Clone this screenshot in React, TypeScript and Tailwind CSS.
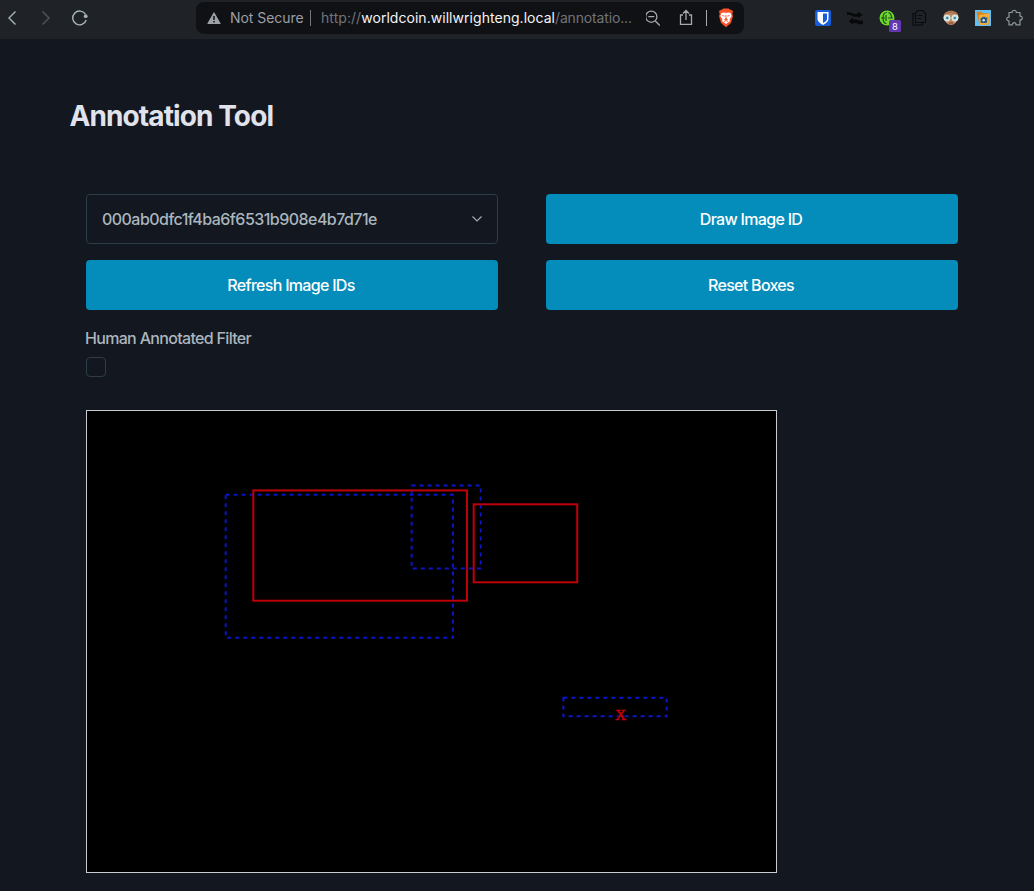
const blue = [
  { x: 139.7, y: 84.7, w: 227.3, h: 143 },
  { x: 325.7, y: 75.5, w: 69, h: 83.1 },
  { x: 477.4, y: 287.7, w: 103.3, h: 18.6 },
];
const red = [
  { x: 167.3, y: 80.4, w: 213.7, h: 110.3 },
  { x: 387.7, y: 94.3, w: 103.5, h: 78 },
];

function Toolbar() {
  return (
    <header className="flex h-[39px] shrink-0 items-start bg-[#1f2226] text-[14px]">
      <div className="flex h-[36px] w-[196px] shrink-0 items-center">
        <svg width="100" height="36" viewBox="0 0 100 36" fill="none" strokeWidth="1.4">
          <path d="M15.500 11.500 9 18l6.500 6.500" stroke="#a4b5bd" />
          <path d="M42.500 11.500 49 18l-6.500 6.500" stroke="#50585e" />
          <path d="M85.400 14.200A6.900 6.900 0 1 0 86.200 20" stroke="#a4b5bd" />
          <circle cx="85.700" cy="16.200" r="1.900" fill="#a4b5bd" />
        </svg>
      </div>
      <div className="mt-[2px] flex h-[32px] w-[548px] shrink-0 items-center rounded-[8px] bg-[#101114] pl-[11px] font-['Inter']">
        <svg className="shrink-0" width="14" height="13" viewBox="0 0 14 13">
          <path d="M7 1 13 11.500H1Z" fill="#9da2a8" stroke="#9da2a8" strokeWidth="1.200" strokeLinejoin="round" />
          <path d="M7 4v4M7 9v1.500" stroke="#101114" strokeWidth="1.500" />
        </svg>
        <span className="-mt-px ml-[9px] w-[80px] shrink-0 whitespace-nowrap tracking-[-0.04px] text-[#9b9fa5]">Not Secure</span>
        <span className="-mt-px h-[16px] w-px shrink-0 bg-[#74777b]" />
        <span className="-mt-px ml-[10px] w-[325px] shrink-0 whitespace-nowrap tracking-[-0.15px] text-[#71747a]">
          <span className="tracking-[0.060px]">http://</span>
          <span className="tracking-[0.040px] text-[#f4f5f6]">worldcoin.willwrighteng.local</span>/annotatio...
        </span>
        <svg className="shrink-0" width="98" height="32" viewBox="646 2 98 32" fill="none" stroke="#a7a9ac" strokeWidth="1.300">
          <circle cx="651.300" cy="16.700" r="5.600" />
          <path d="M648.300 16.700h6M655.300 21l4.500 4.500M683 15h-2.500v9.300h11V15H689M686 20v-9M683 13.500l3-3 3 3" />
          <path d="M706.500 10v16" strokeWidth="1" />
          <path d="m721.500 10 2-1.200h5l2 1.200 2.300 1-.8 3 .7 2-2 7-4.700 4-4.700-4-2-7 .7-2-.8-3Z" fill="#fb542b" stroke="#fb542b" strokeWidth=".5" />
          <path d="m721.500 13 2.500-.5 2 .5 2-.5 2.500.5 1.200 3-2.200 3.500.5 1.500-4 3-4-3 .5-1.500-2.200-3.500Z" fill="#fff" stroke="none" />
          <path d="m722.300 15.500 2.200.7M729.700 15.500l-2.200.7M726 15v3l-1.500 1.500h3L726 18M724 21.500l2-1 2 1" stroke="#fb542b" strokeWidth=".9" />
        </svg>
      </div>
      <Extensions />
    </header>
  );
}

function Extensions() {
  return (
    <svg className="ml-auto shrink-0" width="234" height="39" viewBox="800 0 234 39" fill="none">
      <rect x="815" y="10" width="16" height="16" rx="2" fill="#175ddc" />
      <path d="M817.500 12h11v7q0 3-5.500 6-5.500-3-5.500-6Z" fill="#fff" />
      <path d="M823 13.500h4V19q0 1.800-4 4Z" fill="#175ddc" />
      <path d="M847 12q4 0 6 1.500 2 .8 5-.2v-1.800l4.500 3.500-4.500 3v-1.500q-4 .8-6-.7-2-1.300-5-.8Z" fill="#08090b" />
      <path d="M863 24q-4 .5-6-.7-2-.8-4 0v1.500l-4.500-3.500 4.500-3.800v2q3-.8 5 .5 2 1 5 .5Z" fill="#08090b" />
      <circle cx="887" cy="18" r="7.500" fill="#6edb28" />
      <path d="M887 12.500q-4 0-4 5.500t3.500 5.500M888.500 12.500q3 1 3 5.500M881 18h4M888 18h5M886 15v6" stroke="#1f4a24" strokeWidth="1.200" />
      <rect x="889" y="20" width="12" height="12" rx="1.500" fill="#6237b0" />
      <text x="895" y="30" textAnchor="middle" fill="#fff" fontSize="9.500" fontFamily="Inter, sans-serif">8</text>
      <g stroke="#090b0d" strokeWidth="1.100">
        <path d="M918 10.500h4.500v0l3 3v9H915.500V13ZM914.500 13.500H913v11.500h9.500v-2M917.500 15.500h5M917.500 18.500h3.500" />
      </g>
      <path d="M943.500 17c0-8.500 15-8.500 15 0l-2.500 5.500q-5 5-10 0Z" fill="#c48a63" />
      <path d="M945 15q6-6 12 0" stroke="#a97350" strokeWidth="2" />
      <circle cx="947" cy="18" r="3.100" fill="#b9e6ea" stroke="#e9eeee" />
      <circle cx="955" cy="18" r="3.100" fill="#b9e6ea" stroke="#e9eeee" />
      <circle cx="947.300" cy="18" r="1.200" fill="#467984" />
      <circle cx="954.700" cy="18" r="1.200" fill="#467984" />
      <path d="M949 23h4" stroke="#713e2c" />
      <rect x="975" y="10" width="16" height="16" fill="#65bdf5" />
      <path d="m976.500 12 4.500-.5 1.500 1.500 6.500.5-.5 11-9 .5Z" fill="#d98516" />
      <path d="m979 15 10.500-1.500-1 11-9 .5Z" fill="#f5ad35" />
      <path d="m980.500 18 1.500-.3.700-1h2l.7.700 2-.2-.5 5.800h-6.200Z" fill="#345f87" />
      <circle cx="983.700" cy="20.200" r="1.900" fill="#b8e4fb" stroke="#173d68" />
      <path d="M1009 12.500h3.200c-.6-3 4.600-3 4 0h3.800v3.700c3-.6 3 4.300 0 3.700v5h-4c.2-3-3.800-3-3.700 0H1009v-4c-3 .2-3-4 0-3.800Z" stroke="#8f999f" strokeWidth="1.200" strokeLinejoin="round" />
    </svg>
  );
}

const button = "h-[50px] rounded-[4px] bg-[#048cbb] pr-[2px] text-[16px] font-medium tracking-[-0.7px] text-white";

export default function App() {
  return (
    <div className="flex h-[891px] w-[1034px] flex-col overflow-hidden bg-[#13171f] font-['Inter']">
      <Toolbar />
      <main className="flex flex-col pl-[69px] pt-[56px]">
        <h1 className="h-[40px] pl-[0.500px] text-[28px] font-bold leading-[42px] tracking-[-0.9px] text-[#e0e3eb]">Annotation Tool</h1>
        <div className="ml-[17px] mt-[59px] grid w-[872px] grid-cols-2 gap-x-[48px] gap-y-[16px]">
          <button className="flex h-[50px] items-center justify-between rounded-[4px] border border-[#2c3d49] pl-[15px] pr-[14px] text-[16px] font-medium tracking-[-0.54px] text-[#aab6be]">
            <span>000ab0dfc1f4ba6f6531b908e4b7d71e</span>
            <svg width="12" height="12" viewBox="0 0 12 12" fill="none" stroke="#a0abb3" strokeWidth="1.200">
              <path d="m1.500 3.500 4.500 4.500 4.500-4.500" />
            </svg>
          </button>
          <button className={button}>Draw Image ID</button>
          <button className={button}>Refresh Image IDs</button>
          <button className={button}>Reset Boxes</button>
        </div>
        <label className="mt-[16px] flex flex-col pl-[16px] text-[16px] font-medium leading-[24px] tracking-[-0.68px] text-[#aab6be]">
          Human Annotated Filter
          <span className="ml-px mt-[7px] h-[20px] w-[20px] rounded-[4px] border border-[#2c3d49]" />
        </label>
        <div className="ml-[17px] mt-[33px] h-[463px] w-[691px] border border-[#c9cbcd] bg-black">
          <svg className="-m-px block" width="691" height="463" viewBox="0 0 691 463" fill="none" strokeWidth="2">
            {blue.map((b) => (
              <rect key={b.x} x={b.x} y={b.y} width={b.w} height={b.h} stroke="#0a14c8" strokeDasharray="4 4" />
            ))}
            {red.map((b) => (
              <rect key={b.x} x={b.x} y={b.y} width={b.w} height={b.h} stroke="#c00008" />
            ))}
            <text x="534.500" y="309.700" textAnchor="middle" fill="#c00008" stroke="#c00008" strokeWidth=".6" fontSize="15.500" fontFamily="Liberation Serif, serif">X</text>
          </svg>
        </div>
      </main>
    </div>
  );
}
